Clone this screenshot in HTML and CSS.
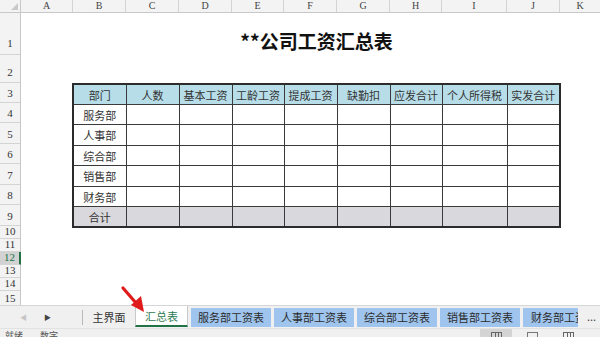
FILE: index.html
```html
<!DOCTYPE html>
<html lang="zh-CN">
<head>
    <meta charset="UTF-8">
    <meta name="viewport" content="width=device-width, initial-scale=1.0">
    <title>公司工资汇总表</title>
    <link rel="stylesheet" href="styles.css">
</head>
<body>
    <div class="sheet">
        <div class="corner"><span class="corner-mark"></span></div>
        <div class="colheads">
            <div class="col col-a">A</div>
            <div class="col col-n">B</div>
            <div class="col col-n">C</div>
            <div class="col col-n">D</div>
            <div class="col col-s">E</div>
            <div class="col col-n">F</div>
            <div class="col col-n">G</div>
            <div class="col col-s">H</div>
            <div class="col col-w">I</div>
            <div class="col col-n">J</div>
            <div class="col col-rest">K</div>
        </div>
        <div class="rowheads">
            <div class="rh r-title">1</div>
            <div class="rh r-gap">2</div>
            <div class="rh r-20">3</div>
            <div class="rh r-20">4</div>
            <div class="rh r-21">5</div>
            <div class="rh r-20">6</div>
            <div class="rh r-21">7</div>
            <div class="rh r-20">8</div>
            <div class="rh r-21">9</div>
            <div class="rh r-13">10</div>
            <div class="rh r-13">11</div>
            <div class="rh r-13 selected">12</div>
            <div class="rh r-13">13</div>
            <div class="rh r-13">14</div>
            <div class="rh r-14">15</div>
        </div>
        <div class="cells">
            <div class="title-row">
                <div class="title">**公司工资汇总表</div>
            </div>
            <div class="gap-row"></div>
            <table class="summary">
                <colgroup>
                    <col class="w53"><col class="w53"><col class="w53"><col class="w52"><col class="w53">
                    <col class="w53"><col class="w52"><col class="w65"><col class="w53">
                </colgroup>
                <tr class="head">
                    <td>部门</td><td>人数</td><td>基本工资</td><td>工龄工资</td><td>提成工资</td>
                    <td>缺勤扣</td><td>应发合计</td><td>个人所得税</td><td>实发合计</td>
                </tr>
                <tr class="h20"><td>服务部</td><td></td><td></td><td></td><td></td><td></td><td></td><td></td><td></td></tr>
                <tr class="h21"><td>人事部</td><td></td><td></td><td></td><td></td><td></td><td></td><td></td><td></td></tr>
                <tr class="h20"><td>综合部</td><td></td><td></td><td></td><td></td><td></td><td></td><td></td><td></td></tr>
                <tr class="h21"><td>销售部</td><td></td><td></td><td></td><td></td><td></td><td></td><td></td><td></td></tr>
                <tr class="h20"><td>财务部</td><td></td><td></td><td></td><td></td><td></td><td></td><td></td><td></td></tr>
                <tr class="total"><td>合计</td><td></td><td></td><td></td><td></td><td></td><td></td><td></td><td></td></tr>
            </table>
        </div>
    </div>

    <div class="tabbar">
        <div class="tabnav">
            <span class="nav prev">&#9664;</span>
            <span class="nav next">&#9654;</span>
        </div>
        <div class="tab plain">主界面</div>
        <div class="tab active">汇总表</div>
        <div class="tab blue">服务部工资表</div>
        <div class="tab blue">人事部工资表</div>
        <div class="tab blue">综合部工资表</div>
        <div class="tab blue">销售部工资表</div>
        <div class="tab blue cut"><span class="cut-text">财务部工资表</span></div>
        <div class="more">...</div>
    </div>

    <div class="statusbar">
        <span class="status-text">就绪</span>
        <span class="status-text second">数字</span>
        <div class="views">
            <span class="view on"><span class="view-icon"></span></span>
            <span class="view"><span class="view-icon page"></span></span>
            <span class="view"><span class="view-icon"></span></span>
        </div>
    </div>

    <svg class="arrow" width="40" height="40" viewBox="0 0 40 40">
        <line x1="4" y1="4" x2="17" y2="19" stroke="#e01b1b" stroke-width="3.2" stroke-linecap="round"/>
        <polygon points="12,21 22,12 25,28" fill="#e01b1b"/>
    </svg>
</body>
</html>
```

FILE: styles.css
```css
html, body {
    margin: 0;
    padding: 0;
}

body {
    width: 600px;
    height: 337px;
    overflow: hidden;
    background: #ffffff;
    font-family: "Noto Sans CJK SC", "Liberation Sans", sans-serif;
    position: relative;
}

.sheet {
    display: grid;
    grid-template-columns: 21px 1fr;
    grid-template-rows: 13px 292px;
    height: 305px;
}

/* headers */
.corner {
    background: #f3f3f3;
    border-right: 1px solid #c8c8c8;
    border-bottom: 1px solid #c8c8c8;
    box-sizing: border-box;
    position: relative;
}

.corner-mark {
    position: absolute;
    right: 2px;
    bottom: 2px;
    width: 0;
    height: 0;
    border-left: 7px solid transparent;
    border-bottom: 7px solid #c9c9c9;
}

.colheads {
    display: flex;
    background: #f3f3f3;
    border-bottom: 1px solid #c8c8c8;
    box-sizing: border-box;
}

.col {
    box-sizing: border-box;
    border-right: 1px solid #d4d4d4;
    font-family: "Liberation Serif", serif;
    font-size: 10px;
    color: #444;
    line-height: 12px;
    text-align: center;
}

.col-a { width: 52px; }
.col-n { width: 53px; }
.col-s { width: 52px; }
.col-w { width: 65px; }
.col-rest { flex: 1; border-right: none; }

.rowheads {
    display: flex;
    flex-direction: column;
    background: #f3f3f3;
    border-right: 1px solid #c8c8c8;
    box-sizing: border-box;
}

.rh {
    box-sizing: border-box;
    border-bottom: 1px solid #d4d4d4;
    display: flex;
    align-items: flex-end;
    justify-content: center;
    padding-bottom: 2px;
    font-family: "Liberation Serif", serif;
    font-size: 11px;
    line-height: 11px;
    color: #333;
}

.r-title { height: 42px; padding-bottom: 5px; }
.r-gap { height: 28px; padding-bottom: 4px; }
.r-20 { height: 20px; padding-bottom: 3px; }
.r-21 { height: 21px; padding-bottom: 3px; }
.r-13 { height: 13px; padding-bottom: 1px; }
.r-14 { height: 14px; padding-bottom: 1px; border-bottom: none; }

.rh.selected {
    background: #d2d2d2;
    color: #217346;
    border-right: 2px solid #217346;
    margin-right: -1px;
}

/* cells */
.cells {
    overflow: hidden;
}

.title-row {
    height: 42px;
    display: flex;
    align-items: center;
    padding-left: 52px;
}

.title {
    width: 487px;
    text-align: center;
    font-size: 19px;
    font-weight: bold;
    color: #111;
    padding-top: 12px;
}

.gap-row {
    height: 28px;
}

.summary {
    margin-left: 51px;
    border-collapse: collapse;
    table-layout: fixed;
    width: 488px;
    border: 2px solid #2b2b2b;
}

.w53 { width: 53px; }
.w52 { width: 52px; }
.w65 { width: 65px; }

.summary td {
    border: 1px solid #3a3a3a;
    padding: 0;
    font-size: 11px;
    color: #333;
    text-align: center;
    line-height: 14px;
    white-space: nowrap;
    overflow: hidden;
}

.summary tr.head td {
    height: 19px;
    background: #b7dde8;
}

.summary tr.h20 td { height: 19px; }
.summary tr.h21 td { height: 20px; }

.summary tr.total td {
    height: 19px;
    background: #d9d8dc;
}

/* sheet tabs */
.tabbar {
    height: 23px;
    background: #f0f0f0;
    border-top: 1px solid #d6d6d6;
    box-sizing: border-box;
    display: flex;
    align-items: stretch;
    gap: 3px;
    padding-top: 2px;
    padding-bottom: 1px;
}

.tabnav {
    width: 82px;
    flex-shrink: 0;
    border-right: 1px solid #b9b9b9;
    margin: 2px 0;
    position: relative;
}

.nav {
    position: absolute;
    top: 2px;
    font-size: 7px;
    line-height: 10px;
}

.nav.prev { left: 20px; color: #c6c6c6; }
.nav.next { left: 44px; color: #444; }

.tab {
    box-sizing: border-box;
    font-size: 11px;
    line-height: 19px;
    text-align: center;
    white-space: nowrap;
    overflow: hidden;
    color: #333;
    flex-shrink: 0;
}

.tab.plain {
    width: 46px;
}

.tab.active {
    width: 53px;
    margin-top: -2px;
    background: #ffffff;
    color: #2f7a55;
    border-left: 1px solid #c9c9c9;
    border-right: 1px solid #c9c9c9;
    border-bottom: 2px solid #217346;
    line-height: 21px;
}

.tab.blue {
    width: 80px;
    background: #9fc5ee;
    color: #2b2b2b;
}

.tab.cut {
    width: 55px;
    text-align: left;
    padding-left: 8px;
}

.cut-text {
    display: block;
    width: 47px;
    overflow: hidden;
}

.more {
    margin-left: 6px;
    font-size: 11px;
    line-height: 16px;
    color: #444;
}

/* status bar */
.statusbar {
    height: 9px;
    background: #f0f0f0;
    border-top: 1px solid #e2e2e2;
    box-sizing: border-box;
    position: relative;
    overflow: hidden;
}

.status-text {
    position: absolute;
    top: 2px;
    left: 5px;
    font-size: 9px;
    line-height: 10px;
    color: #555;
}

.status-text.second {
    left: 40px;
}

.views {
    position: absolute;
    left: 480px;
    top: 0;
    display: flex;
    gap: 4px;
}

.view {
    width: 32px;
    height: 9px;
    display: flex;
    justify-content: center;
}

.view.on {
    background: #d4d4d4;
}

.view-icon {
    margin-top: 3px;
    width: 11px;
    height: 8px;
    border: 1px solid #666;
    box-sizing: border-box;
    background:
        linear-gradient(#666, #666) 3px 0 / 1px 100% no-repeat,
        linear-gradient(#666, #666) 6px 0 / 1px 100% no-repeat;
}

.view-icon.page {
    background: none;
    border-color: #777;
}

/* red pointer */
.arrow {
    position: absolute;
    left: 119px;
    top: 284px;
}
```
